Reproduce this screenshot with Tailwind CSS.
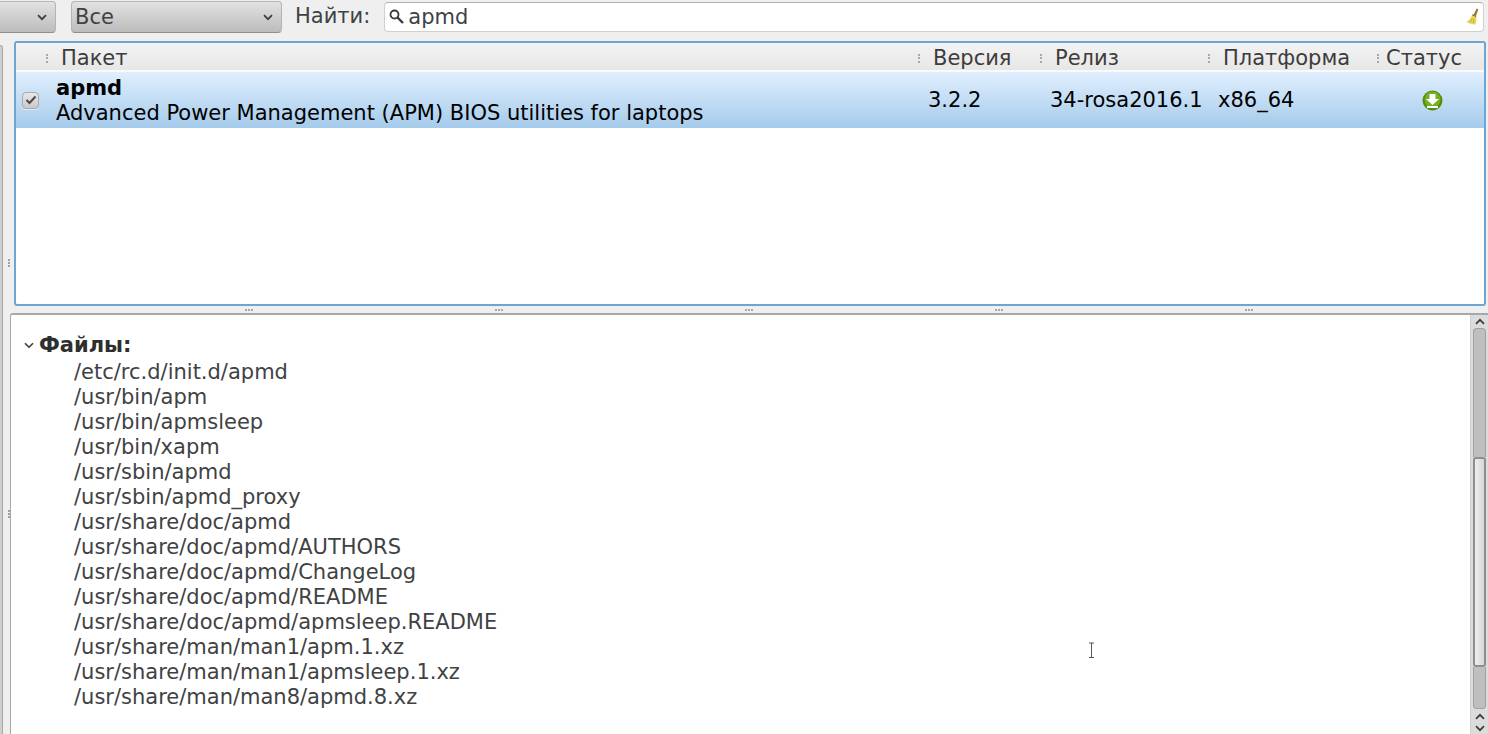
<!DOCTYPE html>
<html><head><meta charset="utf-8"><title>Пакеты</title>
<script src="https://cdn.jsdelivr.net/npm/@tailwindcss/browser@4"></script></head>
<body class="m-0 w-[1488px] h-[734px] overflow-hidden bg-[#efefef] font-['DejaVu_Sans',sans-serif] text-[21px] text-[#3f4244]">
<div class="flex flex-col h-full">
  <header class="flex items-start h-[41px] shrink-0">
    <div class="mt-px ml-[-20px] w-[76px] h-[32px] rounded-[4px] border border-[#b4b4b4] border-b-[#8f8f8f] bg-gradient-to-b from-[#e2e2e2] to-[#bcbcbc] flex items-center justify-end pr-[8px]">
      <svg width="10" height="7" viewBox="0 0 10 7" fill="none" stroke="#3c3c3c" stroke-width="1.7"><path d="M1 1.2l4 4 4-4"/></svg>
    </div>
    <div class="mt-px ml-[15px] w-[211px] h-[32px] rounded-[4px] border border-[#b4b4b4] border-b-[#8f8f8f] bg-gradient-to-b from-[#e2e2e2] to-[#bcbcbc] flex items-center justify-between pl-[3px] pr-[8px] leading-none">
      <span>Все</span>
      <svg width="10" height="7" viewBox="0 0 10 7" fill="none" stroke="#3c3c3c" stroke-width="1.7"><path d="M1 1.2l4 4 4-4"/></svg>
    </div>
    <span class="ml-[13px] mt-[4px] leading-[24px]">Найти:</span>
    <div class="ml-[14px] mt-[2px] w-[1100px] h-[30px] rounded-[4px] border border-[#d0d0d0] border-t-[#b0b0b0] bg-white flex items-center pl-[4px] pr-[3px]">
      <svg width="16" height="16" viewBox="0 0 16 16" fill="none" stroke="#3a3a3a"><circle cx="5.5" cy="5.500" r="4" stroke-width="1.8"/><path d="M8.500 8.500l5.500 5.500" stroke-width="2.4"/></svg>
      <span class="ml-[3px] leading-none">apmd</span>
      <svg class="ml-auto" width="16" height="20" viewBox="0 0 16 20"><path d="M9.500 8L12.600 1.500l1.700.8L12 9z" fill="#a8742a"/><path d="M8.600 7.200l3.800 1.800-.5 1.300-4-1.800z" fill="#6f7a3a"/><path d="M7.800 8.500l4.400 1.800c.4 2.800 0 5.200-.7 7.200-1.300 0-2-.3-2.600-.6l-.5.400c-1-.2-1.800-.6-2.400-1l-.6.300C4.300 16.100 3.300 15.300 2.500 14.500c2.400-.8 4.200-2.800 5.300-6z" fill="#e7d44f"/><path d="M8 12l-2 3.500M10 11.500L9.200 16" stroke="#b9a42e" stroke-width=".7"/></svg>
    </div>
  </header>
  <div class="flex flex-1 min-h-0">
    <div class="w-[3px] mt-[4px] rounded-tr-[3px] bg-[#cfcfcf] border-r border-t border-[#a8a8a8] shrink-0"></div>
    <div class="w-[7px] relative shrink-0">
      <div class="absolute left-[5px] top-[218px] w-[2px] h-[2px] bg-[#a0a0a0] shadow-[0_3px_0_#a0a0a0,0_6px_0_#a0a0a0]"></div>
      <div class="absolute left-[5px] top-[469px] w-[2px] h-[2px] bg-[#a0a0a0] shadow-[0_3px_0_#a0a0a0,0_6px_0_#a0a0a0]"></div>
    </div>
    <div class="flex-1 min-w-0 flex flex-col">
      <section class="ml-[4px] mr-[2px] h-[265px] shrink-0 rounded-[3px] border-2 border-[#6ea5d2] bg-white flex flex-col overflow-hidden">
        <div class="h-[29px] shrink-0 flex items-center pt-[4px] bg-gradient-to-b from-[#f3f3f3] to-[#e7e7e7] border-b-2 border-[#fafafa] text-[#3c3c3c]">
          <div class="w-[902px] shrink-0 flex items-center"><span class="ml-[30px] w-[2px] h-[9px] border-l-2 border-dotted border-[#a8a8a8]"></span><span class="ml-[13px]">Пакет</span></div>
          <div class="w-[122px] shrink-0 flex items-center"><span class="w-[2px] h-[9px] border-l-2 border-dotted border-[#a8a8a8]"></span><span class="ml-[13px]">Версия</span></div>
          <div class="w-[168px] shrink-0 flex items-center"><span class="w-[2px] h-[9px] border-l-2 border-dotted border-[#a8a8a8]"></span><span class="ml-[13px]">Релиз</span></div>
          <div class="w-[169px] shrink-0 flex items-center"><span class="w-[2px] h-[9px] border-l-2 border-dotted border-[#a8a8a8]"></span><span class="ml-[13px]">Платформа</span></div>
          <div class="flex-1 flex items-center"><span class="w-[2px] h-[9px] border-l-2 border-dotted border-[#a8a8a8]"></span><span class="ml-[7px]">Статус</span></div>
        </div>
        <div class="h-[56px] shrink-0 flex items-center bg-gradient-to-b from-[#e0effe] to-[#a5cbeb] text-black">
          <div class="ml-[6px] w-[17px] h-[17px] rounded-[4px] border border-[#a9a9a9] bg-gradient-to-b from-[#e8e8e8] to-[#c9c9c9] shadow-[0_1px_0_#ffffff80] flex items-center justify-center shrink-0">
            <svg width="12" height="10" viewBox="0 0 12 10" fill="none" stroke="#4a4a4a" stroke-width="2"><path d="M1.5 5l3 3 6-6.5"/></svg>
          </div>
          <div class="ml-[17px] mt-[2px] w-[872px] shrink-0 leading-[25px]"><div class="font-bold">apmd</div><div>Advanced Power Management (APM) BIOS utilities for laptops</div></div>
          <div class="w-[122px] mt-[2px] shrink-0">3.2.2</div>
          <div class="w-[168px] mt-[2px] shrink-0">34-rosa2016.1</div>
          <div class="w-[170px] mt-[2px] shrink-0">x86_64</div>
          <div class="flex-1 flex justify-center pr-[8px]">
            <svg width="21" height="21" viewBox="0 0 21 21"><circle cx="10.5" cy="10.5" r="10" fill="#4f8f0c"/><circle cx="10.5" cy="9.500" r="8" fill="#76b020"/><path d="M7.5 4h6v5h3.500l-6.500 6-6.500-6h3.500z" fill="#fff"/><path d="M5 16h11v2H5z" fill="#fff"/></svg>
          </div>
        </div>
      </section>
      <div class="h-[7px] shrink-0 flex justify-around items-center px-[114px]">
        <span class="w-[8px] h-[2px] border-t-2 border-dotted border-[#a8a8a8]"></span><span class="w-[8px] h-[2px] border-t-2 border-dotted border-[#a8a8a8]"></span><span class="w-[8px] h-[2px] border-t-2 border-dotted border-[#a8a8a8]"></span><span class="w-[8px] h-[2px] border-t-2 border-dotted border-[#a8a8a8]"></span><span class="w-[8px] h-[2px] border-t-2 border-dotted border-[#a8a8a8]"></span>
      </div>
      <section class="flex-1 min-h-0 flex border-t-2 border-l border-[#a8a8a8] rounded-tl-[3px] bg-white">
        <div class="flex-1 min-w-0 pt-[18px] relative">
          <div class="flex items-center h-[25px]">
            <svg class="ml-[13px]" width="10" height="7" viewBox="0 0 10 7" fill="none" stroke="#3c3c3c" stroke-width="1.6"><path d="M1 1.2l4 4 4-4"/></svg>
            <b class="ml-[5px] text-[#2e2e2e]">Файлы:</b>
          </div>
          <ul class="pl-[63px] mt-[2px] leading-[25px]">
            <li>/etc/rc.d/init.d/apmd</li><li>/usr/bin/apm</li><li>/usr/bin/apmsleep</li><li>/usr/bin/xapm</li><li>/usr/sbin/apmd</li><li>/usr/sbin/apmd_proxy</li><li>/usr/share/doc/apmd</li><li>/usr/share/doc/apmd/AUTHORS</li><li>/usr/share/doc/apmd/ChangeLog</li><li>/usr/share/doc/apmd/README</li><li>/usr/share/doc/apmd/apmsleep.README</li><li>/usr/share/man/man1/apm.1.xz</li><li>/usr/share/man/man1/apmsleep.1.xz</li><li>/usr/share/man/man8/apmd.8.xz</li>
          </ul>
          <svg class="absolute left-[1077px] top-[327px]" width="7" height="17" viewBox="0 0 7 17" fill="none" stroke="#555" stroke-width="1"><path d="M1 1h5M1 15.500h5M3.500 1v14.500"/></svg>
        </div>
        <div class="w-[18px] shrink-0 bg-[#dcdcdc] border-l border-[#cfcfcf] flex flex-col items-center">
          <div class="h-[13px] flex items-center shrink-0"><svg width="10" height="7" viewBox="0 0 10 7" fill="none" stroke="#3c3c3c" stroke-width="1.7"><path d="M1 5.800l4-4 4 4"/></svg></div>
          <div class="w-[13px] flex-1 min-h-0 flex flex-col">
            <div class="h-[129px] shrink-0 rounded-t-[4px] border border-[#a0a0a0] border-b-0 bg-[#bfbfbf]"></div>
            <div class="h-[210px] shrink-0 rounded-[3px] border-2 border-[#8e8e8e] bg-gradient-to-r from-[#eeeeee] to-[#d8d8d8]"></div>
            <div class="flex-1 rounded-b-[4px] border border-[#a0a0a0] border-t-0 bg-[#bfbfbf]"></div>
          </div>
          <div class="h-[25px] shrink-0 flex flex-col items-center justify-between pt-[4px]">
            <svg width="10" height="7" viewBox="0 0 10 7" fill="none" stroke="#3c3c3c" stroke-width="1.7"><path d="M1 5.800l4-4 4 4"/></svg>
            <svg class="mb-[2px]" width="10" height="7" viewBox="0 0 10 7" fill="none" stroke="#3c3c3c" stroke-width="1.7"><path d="M1 1.200l4 4 4-4"/></svg>
          </div>
        </div>
      </section>
    </div>
  </div>
</div>
</body></html>
